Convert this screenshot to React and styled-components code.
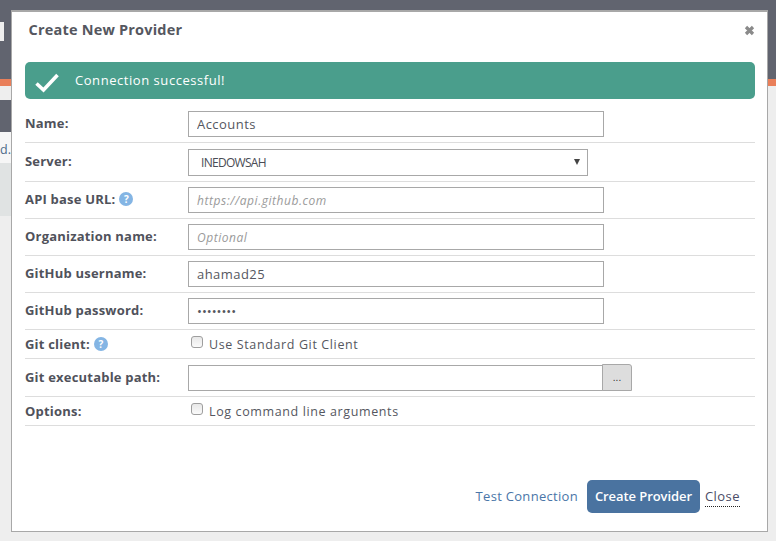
import React from "react";
import styled, { createGlobalStyle } from "styled-components";

const GlobalStyle = createGlobalStyle`
  html, body {
    margin: 0;
    height: 541px;
    overflow: hidden;
    background: #eeeeee;
    font-family: "Open Sans", "Liberation Sans", sans-serif;
  }
`;

const Page = styled.div`
  position: relative;
  width: 776px;
  height: 541px;
  overflow: hidden;
`;

const PageHeader = styled.div`
  height: 79px;
  padding-top: 22px;
  box-sizing: border-box;
  background: #61646f;
`;

const HeaderChip = styled.div`
  width: 4px;
  height: 19px;
  background: #eeeeee;
`;

const AccentBar = styled.div`
  height: 7px;
  background: #e97f5a;
`;

const SideColumn = styled.div`
  width: 200px;
  padding-top: 14px;
`;

const DarkBand = styled.div`
  height: 32px;
  background: #61646f;
`;

const Notice = styled.div`
  height: 31px;
  background: #f6f6f6;
  color: #4d6a8a;
  font-size: 12.5px;
  line-height: 36px;
`;

const GreyBlock = styled.div`
  height: 53px;
  background: #e0e3e3;
`;

const Modal = styled.div`
  position: absolute;
  left: 11px;
  top: 10px;
  width: 757px;
  height: 522px;
  box-sizing: border-box;
  border: 1px solid #a8a8a8;
  border-top-width: 2px;
  background: #ffffff;
  padding: 0 12px 0 13px;
  display: flex;
  flex-direction: column;
`;

const ModalHeader = styled.div`
  height: 50px;
  padding: 8px 4px 0 3.5px;
  box-sizing: border-box;
  display: flex;
  justify-content: space-between;
  align-items: flex-start;
`;

const Title = styled.h2`
  margin: 0;
  font-size: 14.5px;
  line-height: 20px;
  font-weight: 700;
  letter-spacing: 0.2px;
  color: #555760;
`;

const CloseIcon = styled.svg`
  width: 11px;
  height: 11px;
  margin: 5px -4px 0 0;
`;

const Alert = styled.div`
  height: 37px;
  border-radius: 5px;
  background: #4a9e8c;
  color: #ffffff;
  display: flex;
  align-items: center;
  padding: 0 0 2px 10px;
  box-sizing: border-box;
  font-size: 13px;
  letter-spacing: 0.55px;
  flex-shrink: 0;
`;

const CheckIcon = styled.svg`
  width: 24px;
  height: 20px;
  margin: 6px 16px 0 0;
`;

const Form = styled.div`
  margin-top: 7px;
  display: flex;
  flex-direction: column;
`;

const Row = styled.div`
  display: flex;
  align-items: center;
  height: ${(p) => p.$height}px;
  box-sizing: border-box;
  border-bottom: 1px solid #dddddd;
`;

const Label = styled.label`
  width: 163px;
  flex-shrink: 0;
  padding-bottom: ${(p) => (p.$flat ? 0 : 2)}px;
  font-size: 13px;
  font-weight: 700;
  letter-spacing: 0.2px;
  color: #50525b;
  display: flex;
  align-items: center;
  gap: 4px;
`;

const TextInput = styled.input`
  width: ${(p) => p.$width || 416}px;
  height: 26px;
  box-sizing: border-box;
  border: 1px solid #a8a8a8;
  outline: none;
  padding: 0 8px;
  font-family: inherit;
  font-size: 13px;
  letter-spacing: 0.45px;
  color: #555760;
  &[type="password"] {
    letter-spacing: 0;
  }
  &::placeholder {
    font-style: italic;
    color: #9a9a9a;
    font-size: 12px;
    letter-spacing: 0.55px;
  }
`;

const SelectBox = styled.div`
  width: 400px;
  height: 27px;
  box-sizing: border-box;
  border: 1px solid #a8a8a8;
  padding: 0 7px 0 12px;
  display: flex;
  align-items: center;
  justify-content: space-between;
  font-size: 12px;
  letter-spacing: -0.7px;
  color: #4a4c55;
`;

const Caret = styled.span`
  width: 0;
  height: 0;
  border-left: 3px solid transparent;
  border-right: 3px solid transparent;
  border-top: 6px solid #444444;
`;

const HelpIcon = styled.span`
  width: 14px;
  height: 14px;
  border-radius: 50%;
  background: #84b5e4;
  color: #ffffff;
  font-size: 10px;
  font-weight: 700;
  line-height: 14px;
  letter-spacing: 0;
  text-align: center;
`;

const CheckLabel = styled.label`
  display: flex;
  align-items: center;
  margin-left: 3px;
  font-size: 12.5px;
  letter-spacing: 0.62px;
  color: #555760;
`;

const CheckBox = styled.span`
  width: 12px;
  height: 12px;
  margin: -4px 6px 0 0;
  box-sizing: border-box;
  border: 1px solid #9e9e9e;
  border-radius: 3px;
  background: linear-gradient(#e8e8e8, #fafafa);
`;

const InputGroup = styled.div`
  display: flex;
`;

const BrowseButton = styled.button`
  width: 30px;
  height: 27px;
  margin: -1px 0 0 -1px;
  box-sizing: border-box;
  border: 1px solid #a8a8a8;
  border-radius: 0 3px 0 0;
  background: #dddddd;
  color: #333333;
  font-size: 10px;
  padding: 0;
`;

const Footer = styled.div`
  margin-top: auto;
  height: 51px;
  padding-right: 15px;
  display: flex;
  justify-content: flex-end;
  align-items: flex-start;
  font-size: 13px;
  letter-spacing: 0.3px;
`;

const TestLink = styled.a`
  color: #4a76a8;
  line-height: 33px;
  margin-right: 9px;
`;

const PrimaryButton = styled.button`
  width: 113px;
  height: 33px;
  border: none;
  border-radius: 5px;
  background: #4a73a0;
  color: #ffffff;
  font-family: inherit;
  font-size: 13px;
  font-weight: 600;
  letter-spacing: -0.07px;
  padding: 0 0 2px;
`;

const CloseLink = styled.a`
  margin-left: 5px;
  margin-top: 7px;
  color: #4a4c66;
  line-height: 19px;
  letter-spacing: 0.45px;
  border-bottom: 1px dotted #222222;
`;

const rows = [
  { label: "Name:", height: 37, value: "Accounts" },
  { label: "API base URL:", height: 37, placeholder: "https://api.github.com", help: true },
  { label: "Organization name:", height: 37, placeholder: "Optional" },
  { label: "GitHub username:", height: 37, value: "ahamad25" },
  { label: "GitHub password:", height: 37, value: "ahamad25", type: "password" },
];

const inputRow = (r) => (
  <Row key={r.label} $height={r.height}>
    <Label>
      {r.label}
      {r.help && <HelpIcon>?</HelpIcon>}
    </Label>
    <TextInput
      type={r.type || "text"}
      defaultValue={r.value}
      placeholder={r.placeholder}
    />
  </Row>
);

export default function App() {
  return (
    <Page>
      <GlobalStyle />
      <PageHeader>
        <HeaderChip />
      </PageHeader>
      <AccentBar />
      <SideColumn>
        <DarkBand />
        <Notice>d.</Notice>
        <GreyBlock />
      </SideColumn>
      <Modal>
        <ModalHeader>
          <Title>Create New Provider</Title>
          <CloseIcon viewBox="0 0 11 11">
            <path d="M2 2 9 9M9 2 2 9" stroke="#8a8a8a" strokeWidth="3.2" />
          </CloseIcon>
        </ModalHeader>
        <Alert>
          <CheckIcon viewBox="0 0 24 20">
            <path d="M1.5 10.5 8.5 17 22.5 2" fill="none" stroke="#ffffff" strokeWidth="3.6" />
          </CheckIcon>
          Connection successful!
        </Alert>
        <Form>
          {inputRow(rows[0])}
          <Row $height={39}>
            <Label>Server:</Label>
            <SelectBox>
              INEDOWSAH
              <Caret />
            </SelectBox>
          </Row>
          {rows.slice(1).map(inputRow)}
          <Row $height={29}>
            <Label $flat>
              Git client:
              <HelpIcon>?</HelpIcon>
            </Label>
            <CheckLabel>
              <CheckBox />
              Use Standard Git Client
            </CheckLabel>
          </Row>
          <Row $height={38}>
            <Label>Git executable path:</Label>
            <InputGroup>
              <TextInput $width={415} />
              <BrowseButton>...</BrowseButton>
            </InputGroup>
          </Row>
          <Row $height={29}>
            <Label $flat>Options:</Label>
            <CheckLabel>
              <CheckBox />
              Log command line arguments
            </CheckLabel>
          </Row>
        </Form>
        <Footer>
          <TestLink>Test Connection</TestLink>
          <PrimaryButton>Create Provider</PrimaryButton>
          <CloseLink>Close</CloseLink>
        </Footer>
      </Modal>
    </Page>
  );
}
